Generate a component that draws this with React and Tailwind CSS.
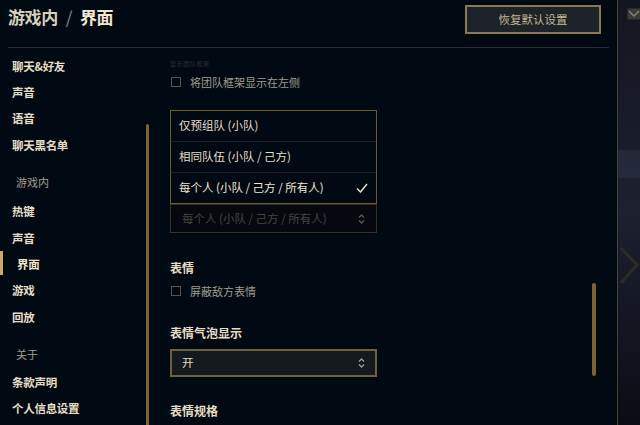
import React from 'react';

const font = { fontFamily: '"Noto Sans CJK SC", "Noto Sans", sans-serif' };

function NavItem({ label, active }) {
  return (
    <div className="relative h-[26.4px] flex items-center">
      {active && <div className="absolute left-0 top-[0px] h-[24px] w-[3px] bg-[#c8aa6e]" />}
      <span
        className={`text-[11.5px] font-bold tracking-tight ${
          active ? 'pl-[17px] text-[#f0e6d2]' : 'pl-[12px] text-[#e6dcc4]'
        }`}
      >
        {label}
      </span>
    </div>
  );
}

function NavSection({ label }) {
  return (
    <div className="h-[30px] flex items-end pb-[4px] pl-[16px]">
      <span className="text-[11px] text-[#a09b8c]">{label}</span>
    </div>
  );
}

function Checkbox({ label }) {
  return (
    <div className="flex items-center h-[14px]">
      <div className="w-[10px] h-[10px] border border-[#5b5344] ml-[1px]" />
      <span className="ml-[9px] text-[11px] text-[#a09b8c]">{label}</span>
    </div>
  );
}

function UpDown({ color }) {
  return (
    <svg width="7" height="12" viewBox="0 0 7 12" fill="none" stroke={color} strokeWidth="1.3">
      <path d="M1 4.5 L3.5 2 L6 4.5" />
      <path d="M1 7.5 L3.5 10 L6 7.5" />
    </svg>
  );
}

export default function App() {
  return (
    <div className="w-[640px] h-[425px] overflow-hidden flex bg-[#010a13]" style={font}>
      {/* main panel */}
      <div className="w-[617px] h-full flex flex-col">
        <div className="h-[48px] mx-2 flex items-start justify-between border-b border-[#272b33]">
          <div className="mt-[4px] text-[17px] font-bold tracking-tight">
            <span className="text-[#d6cfbd]">游戏内</span>
            <span className="text-[#8f8a7e] mx-[8px] font-normal">/</span>
            <span className="text-[#f0e6d2]">界面</span>
          </div>
          <button className="mt-[5px] mr-[8px] w-[136px] h-[29px] border-2 border-[#8a7a52] bg-[#1e232a] text-[11.5px] text-[#c4b68e]">
            恢复默认设置
          </button>
        </div>

        <div className="flex flex-1 min-h-0">
          {/* left nav */}
          <div className="w-[146px] pt-[5px]">
            <NavItem label="聊天&好友" />
            <NavItem label="声音" />
            <NavItem label="语音" />
            <NavItem label="聊天黑名单" />
            <div className="h-[6px]" />
            <NavSection label="游戏内" />
            <div className="h-[4px]" />
            <NavItem label="热键" />
            <NavItem label="声音" />
            <NavItem label="界面" active />
            <NavItem label="游戏" />
            <NavItem label="回放" />
            <div className="h-[6px]" />
            <NavSection label="关于" />
            <div className="h-[3px]" />
            <NavItem label="条款声明" />
            <NavItem label="个人信息设置" />
          </div>

          {/* left scrollbar */}
          <div className="w-[4px] pt-[76px]">
            <div className="w-[3px] h-full bg-[#7d6331] rounded-t-full" />
          </div>

          {/* content */}
          <div className="flex-1 pl-[20px] pt-[11px] flex flex-col">
            <div className="h-[10px] text-[6px] leading-[10px] text-[#2c2f37] tracking-widest">显示团队框架</div>
            <div className="mt-[6px]">
              <Checkbox label="将团队框架显示在左侧" />
            </div>

            <div className="mt-[21px] w-[207px] border border-[#6e5a32] bg-[#010a13]">
              <div className="h-[31px] flex items-center px-[8px] border-b border-[#1c2028] text-[11.5px] text-[#e6dcc4]">
                仅预组队 (小队)
              </div>
              <div className="h-[31px] flex items-center px-[8px] border-b border-[#1c2028] text-[11.5px] text-[#e6dcc4]">
                相同队伍 (小队 / 己方)
              </div>
              <div className="h-[30px] flex items-center justify-between px-[8px] text-[11.5px] text-[#f0e6d2]">
                <span>每个人 (小队 / 己方 / 所有人)</span>
                <svg width="12" height="10" viewBox="0 0 12 10" fill="none" stroke="#e6dcc4" strokeWidth="1.5">
                  <path d="M1 5.5 L4.5 9 L11 1" />
                </svg>
              </div>
            </div>
            <div className="w-[207px] h-[29px] border border-[#3a3122] bg-[#05090f] flex items-center justify-between px-[11px] text-[11.5px] text-[#46453f]">
              <span>每个人 (小队 / 己方 / 所有人)</span>
              <UpDown color="#5a5548" />
            </div>

            <div className="mt-[27px] h-[16px] flex items-center text-[12px] font-bold text-[#e6dcc4]">表情</div>
            <div className="mt-[8px]">
              <Checkbox label="屏蔽敌方表情" />
            </div>

            <div className="mt-[27px] h-[16px] flex items-center text-[12px] font-bold text-[#e6dcc4]">表情气泡显示</div>
            <div className="mt-[8px] w-[207px] h-[28px] border-2 border-[#6f6040] bg-[#141920] flex items-center justify-between pl-[10px] pr-[10px] text-[11.5px] text-[#e6dcc4]">
              <span>开</span>
              <UpDown color="#a09b8c" />
            </div>

            <div className="mt-[26px] h-[16px] flex items-center text-[12px] font-bold text-[#e6dcc4]">表情规格</div>
          </div>

          {/* right scrollbar */}
          <div className="w-[25px] pt-[235px]">
            <div className="w-[4px] h-[93px] bg-[#7d6331] rounded-full" />
          </div>
        </div>
      </div>

      {/* right edge strip */}
      <div className="w-[23px] h-full border-l border-[#4a4130] bg-gradient-to-b from-[#14161f] via-[#1c2030] to-[#0b0d14] flex flex-col">
        <div className="mt-[8px] ml-[9px]">
          <svg width="14" height="12" viewBox="0 0 14 12" fill="none">
            <rect x="0.5" y="0.5" width="13" height="11" fill="#3a3a38" />
            <path d="M2 3 L7 8 L12 3" stroke="#8c8574" strokeWidth="1.3" />
          </svg>
        </div>
        <div className="mt-[130px] h-[28px] bg-[#2a2e3e] opacity-70" />
        <div className="mt-[65px] ml-[1px]">
          <svg width="22" height="50" viewBox="0 0 22 50" fill="none" stroke="#2e2b22" strokeWidth="3">
            <path d="M2 5 L18 22 L2 40" />
          </svg>
        </div>
      </div>
    </div>
  );
}
